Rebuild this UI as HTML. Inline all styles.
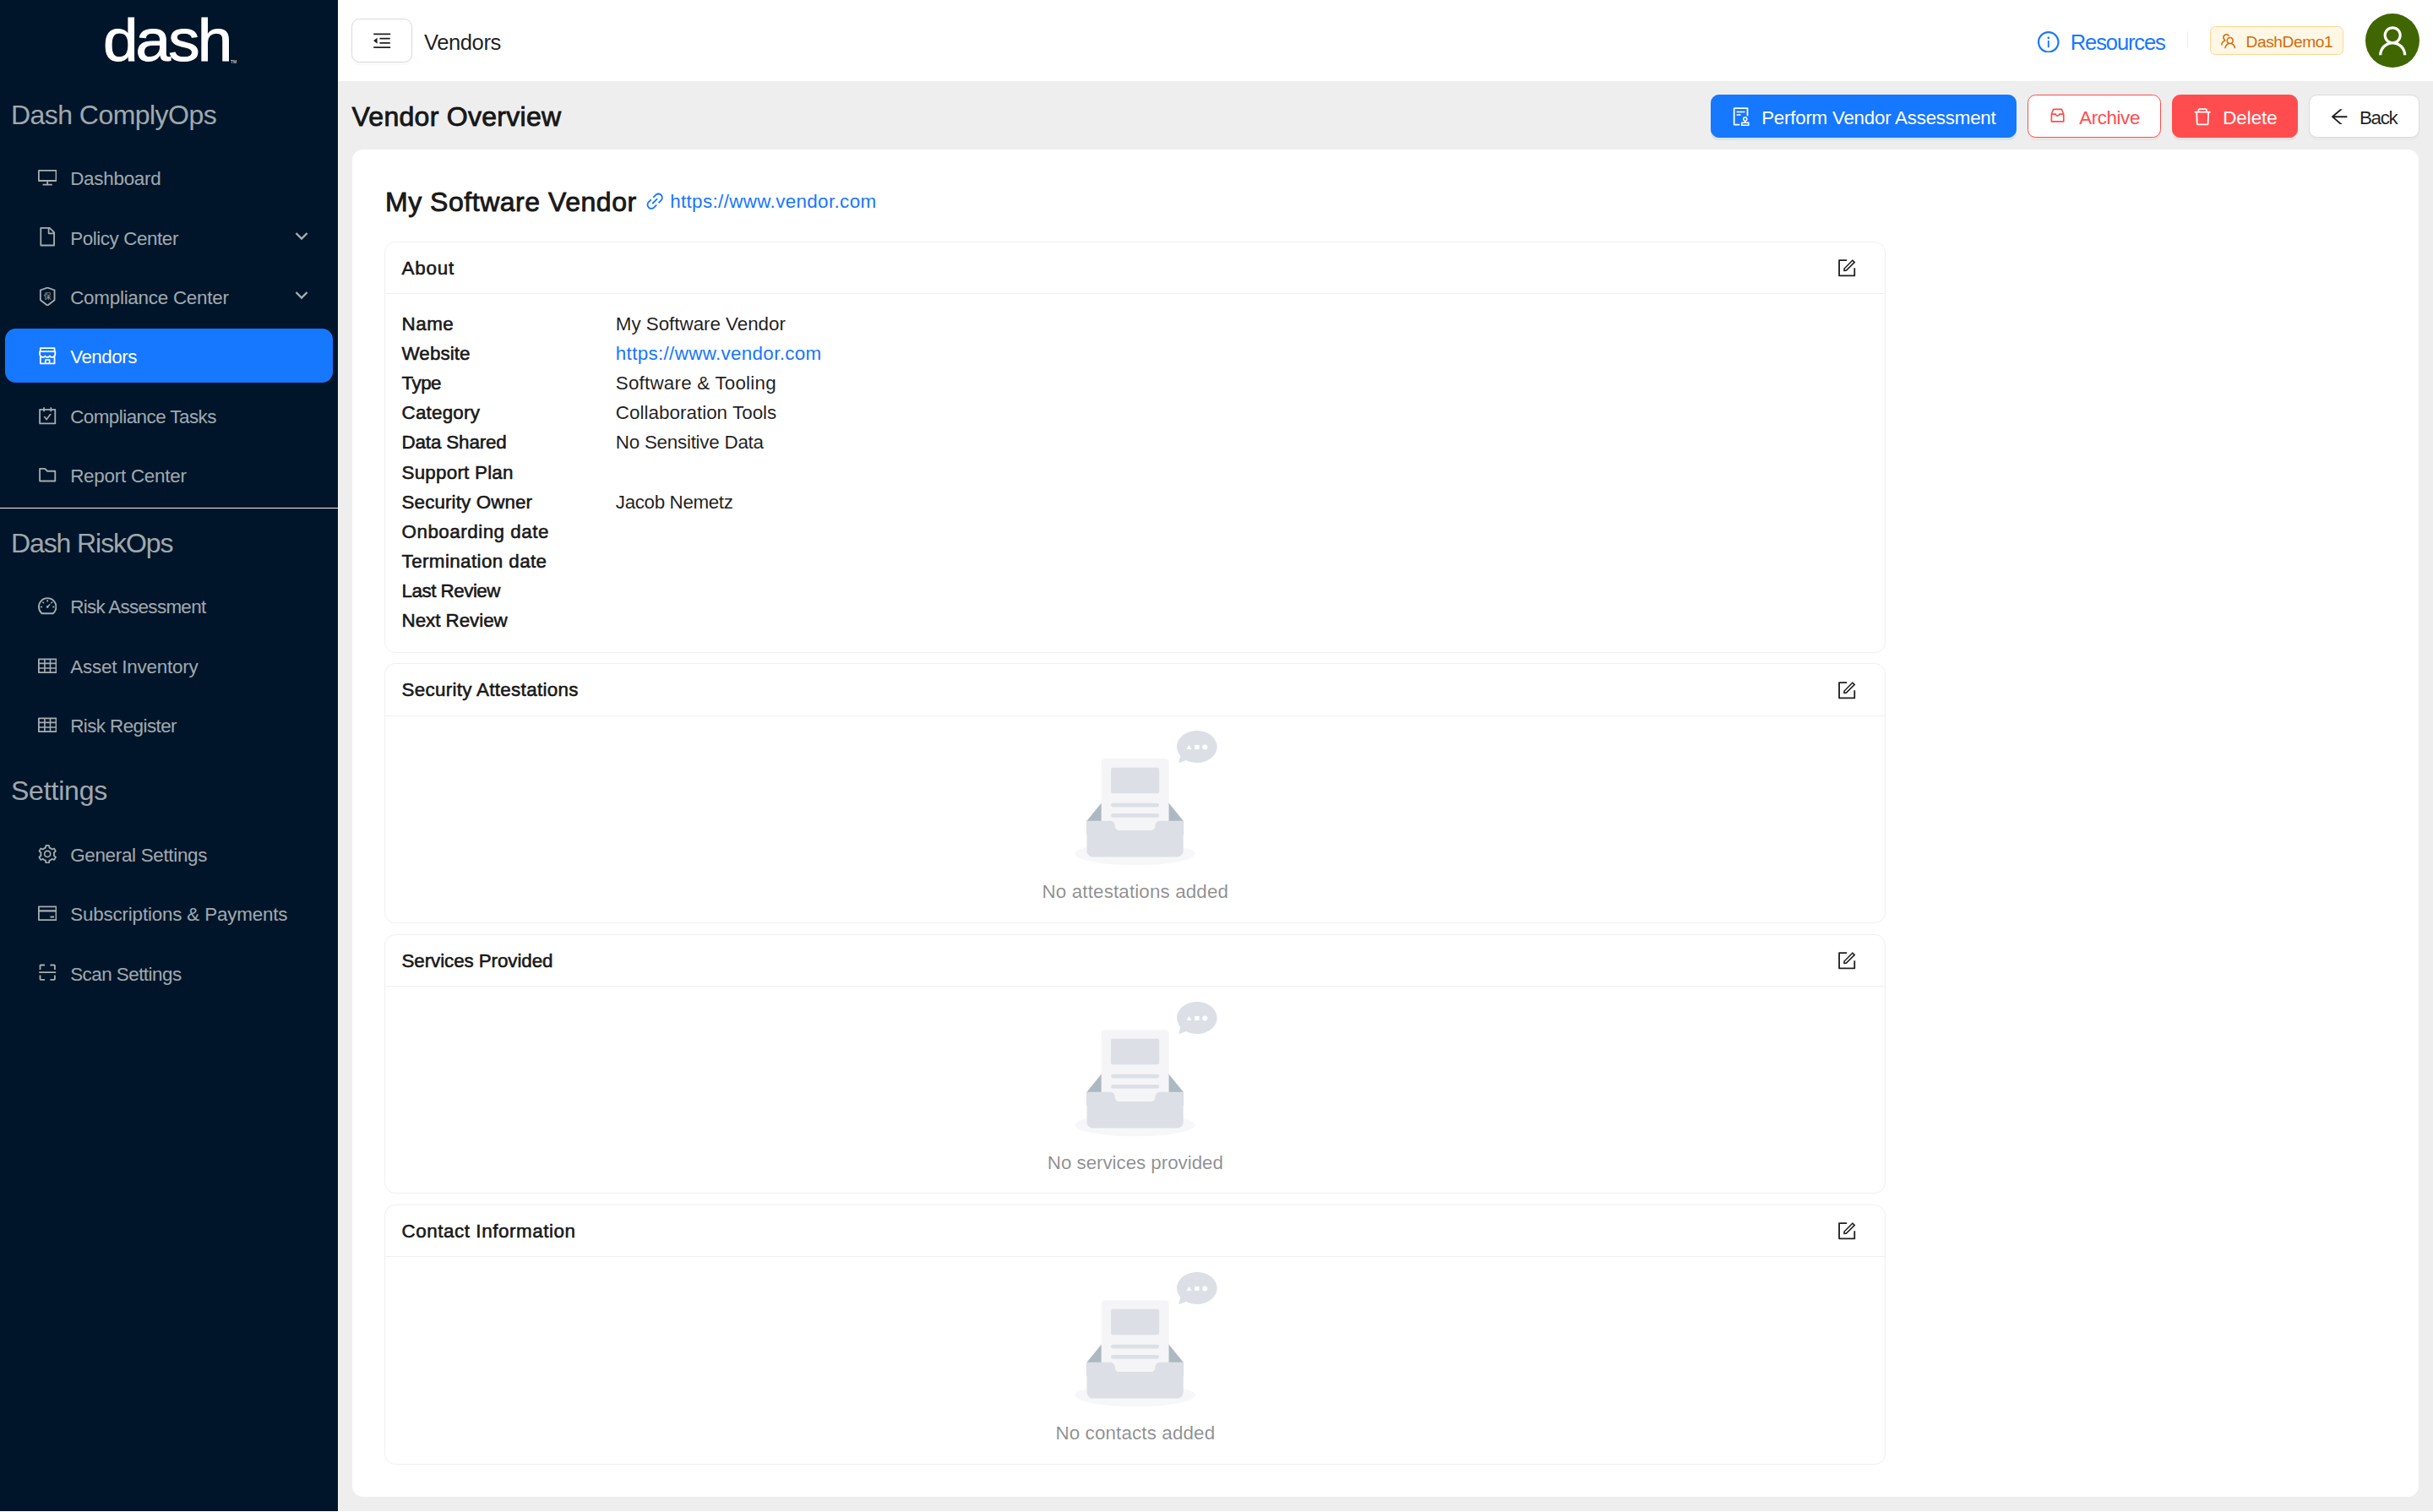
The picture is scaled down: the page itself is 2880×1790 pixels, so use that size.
<!DOCTYPE html>
<html lang="en">
<head>
<meta charset="utf-8">
<title>Vendors - Dash ComplyOps</title>
<style>
*{box-sizing:border-box}
html,body{margin:0;padding:0;background:#fff}
body{zoom:1.6;font-family:"Liberation Sans","Noto Sans CJK SC",sans-serif;font-size:14px;line-height:22px;color:rgba(0,0,0,.88);overflow:hidden;-webkit-font-smoothing:antialiased}
h1,h2,h3,h4,ul,li,p{margin:0;padding:0;font-weight:inherit;font-size:inherit}
ul{list-style:none}
a{color:#1677ff;text-decoration:none}
.anticon{display:inline-flex;align-items:center;line-height:0;flex:none}
.anticon svg{display:block}
.tx{position:relative;top:.0675em;white-space:nowrap}
.sb{font-weight:400!important;-webkit-text-stroke:.028em currentColor}
#app{position:relative;width:1800px;height:1118px;background:#eee;overflow:hidden}
/* ---------- sidebar ---------- */
.sider{position:absolute;left:0;top:0;width:250px;height:1118px;background:#001529;color:rgba(255,255,255,.65)}
.sider-edge{position:absolute;left:250px;top:0;width:.625px;height:1118px;background:#f5f5f5}
.logo{position:relative;height:60px;color:#fff}
.logo-text{position:absolute;left:76.1px;top:.1px;font-size:44.1px;line-height:60px;-webkit-text-stroke:.6px #fff;transform:scaleX(1.06);transform-origin:0 50%}
.logo-text .tx{letter-spacing:-1.75px!important;top:0}
.logo-tm{position:absolute;left:170.6px;top:44.9px;font-size:3px;line-height:3px;letter-spacing:.1px}
.grp{height:28px;line-height:28.2px;font-size:20px;font-weight:400;padding-left:8.1px;white-space:nowrap}
.menu{padding-top:4px;display:flow-root}
.mi{position:relative;display:flex;align-items:center;height:40px;line-height:40px;margin:0 4px 4px 4px;padding-left:24px;border-radius:8px;white-space:nowrap}
.mi .mt{margin-left:10px;top:calc(.0675em + .34px)}
.mi.sel{background:#1677ff;color:#fff}
.mi .arrow{position:absolute;right:18px;top:50%;margin-top:-5.45px;width:10px;height:10px}
.sdiv{height:.625px;background:#f0f0f0;width:250.625px}
/* ---------- header ---------- */
.main{position:absolute;left:250px;top:0;width:1550px;height:1118px}
.hdr{position:relative;height:60px;background:#fff}
.btn{display:inline-flex;align-items:center;justify-content:center;height:32px;padding:0 15px;border:1px solid #d9d9d9;border-radius:6px;background:#fff;font-size:14px;line-height:22px;color:rgba(0,0,0,.88);box-shadow:0 2px 0 rgba(0,0,0,.02);white-space:nowrap;font-family:inherit}
.btn .anticon+span,.btn .icw+span{margin-left:8px}
.btn .tx{top:calc(.0675em + .6px)}
.actions .btn{justify-content:flex-start}
.btn.primary{background:#1677ff;border-color:#1677ff;color:#fff;box-shadow:0 2px 0 rgba(5,145,255,.1)}
.btn.danger{background:#ff4d4f;border-color:#ff4d4f;color:#fff;box-shadow:0 2px 0 rgba(255,38,5,.06)}
.btn.danger-o{border-color:#ff4d4f;color:#ff4d4f;box-shadow:0 2px 0 rgba(255,38,5,.06)}
.toggle{position:absolute;left:10.3px;top:13.9px;width:44.4px;height:32.4px;padding:0}
.crumb{position:absolute;left:63.7px;top:0;height:60px;line-height:60px;font-size:16px}
.res{position:absolute;left:1257.7px;top:0;height:60px;display:flex;align-items:center;font-size:16px;color:#1677ff}
.res .anticon{margin-right:8px;position:relative;top:.9px}
.res .tx{top:calc(.0675em + .6px)}
.vdiv{position:absolute;left:1368.2px;top:23.3px;width:.625px;height:12.6px;background:rgba(5,5,5,.06)}
.tag{position:absolute;left:1385px;top:19.5px;height:21.2px;width:98.75px;display:flex;align-items:center;padding:0 7px;border:1px solid #ffd591;border-radius:4px;background:#fff7e6;color:#d46b08;font-size:12px;line-height:20px}
.tag .anticon{margin-right:7px}
.tag .tx{top:calc(.0675em + .5px)}
.avatar{position:absolute;left:1500px;top:10px;width:40px;height:40px;border-radius:50%;background:#3f6600;color:#fff;display:flex;align-items:center;justify-content:center}
/* ---------- content ---------- */
.titlebar{position:absolute;left:10.3px;right:10px;top:70px;height:32px;display:flex;align-items:center;justify-content:space-between}
.titlebar h4{font-size:20px;font-weight:700;line-height:28px;position:relative}
.actions{display:flex;gap:8px}
.card{position:absolute;left:10.6px;top:110.6px;width:1528.8px;height:996.8px;background:#fff;border-radius:8px;padding:23.4px 24px 0 24px}
.vh{display:flex;align-items:center;height:28px}
.vh h4{font-size:20px;line-height:28px;left:.4px}
.vh .lnk{display:flex;align-items:center;margin-left:7px;height:22px;position:relative;top:0}
.vh .lnk .anticon{margin-right:4.1px;position:relative;top:.6px}
.scard{width:1110.6px;border:1px solid #f0f0f0;border-radius:8px;background:#fff;margin-top:8px;height:192.25px}
.scard.first{margin-top:16.65px;height:304.25px}
.shead{height:38.2px;padding:0 12px;display:flex;align-items:center;justify-content:space-between;border-bottom:1px solid #f0f0f0;font-weight:700}
.shead .edit{padding:0 8.95px;display:flex;align-items:center;height:24px;position:relative;top:.2px}
.sbody{padding:10.1px 12px 0 12px}
.about .sbody{}
.empty .sbody{padding-top:11.2px}
.row{display:flex;height:22px;line-height:22px}
.row .lb{width:158.3px;font-weight:700;flex:none}
.eimg{height:100px;text-align:center}
.eimg svg{height:100px;width:121.05px;display:inline-block;overflow:visible;position:relative;left:0}
.etxt{margin-top:7.2px;text-align:center;color:rgba(0,0,0,.45);height:22px;line-height:22px}

.actions .btn>.anticon{position:relative;top:.3px}
.actions .btn .icw{position:relative;top:-.4px;left:-.4px}
.actions .btn .icw+span{margin-left:8.6px}

.shead .tx{top:calc(.0675em - .6px)}
.titlebar h4.tx{top:calc(.0675em - .75px)}

</style>
</head>
<body>
<div id="app">
<aside class="sider">
  <div class="logo"><span class="logo-text"><span class="tx" style="letter-spacing:-0.417px;">dash</span></span><span class="logo-tm">TM</span></div>
  <h4 class="grp" style="margin-top:9.6px"><span class="tx" style="letter-spacing:-0.337px;">Dash ComplyOps</span></h4>
  <ul class="menu" style="margin-top:9.78px">
    <li class="mi"><span class="anticon" style="font-size:14px;"><svg viewBox="64 64 896 896" width="1em" height="1em" fill="currentColor"><path d="M928 140H96c-17.7 0-32 14.3-32 32v496c0 17.7 14.3 32 32 32h380v112H304c-8.8 0-16 7.2-16 16v48c0 4.400 3.600 8 8 8h432c4.400 0 8-3.600 8-8v-48c0-8.800-7.200-16-16-16H548V700h380c17.700 0 32-14.300 32-32V172c0-17.700-14.300-32-32-32zm-40 488H136V212h752v416z"/></svg></span><span class="tx mt" style="letter-spacing:-0.156px;">Dashboard</span></li>
    <li class="mi"><span class="anticon" style="font-size:14px;"><svg viewBox="64 64 896 896" width="1em" height="1em" fill="currentColor"><path d="M854.6 288.6L639.4 73.4c-6-6-14.1-9.4-22.6-9.4H192c-17.7 0-32 14.3-32 32v832c0 17.7 14.3 32 32 32h640c17.7 0 32-14.3 32-32V311.3c0-8.500-3.400-16.700-9.400-22.700zM790.200 326H602V137.800L790.200 326zm1.800 562H232V136h302v216a42 42 0 0042 42h216v494z"/></svg></span><span class="tx mt" style="letter-spacing:-0.26px;">Policy Center</span><svg class="arrow" viewBox="0 0 10 10"><path d="M.9 2.5 5 6.6 9.1 2.5" fill="none" stroke="currentColor" stroke-width="1.5"/></svg></li>
    <li class="mi"><span class="anticon" style="font-size:14px;"><svg viewBox="64 64 896 896" width="1em" height="1em" fill="currentColor"><path d="M866.9 169.9L527.1 54.1C523 52.7 517.5 52 512 52s-11 .7-15.1 2.1L157.1 169.9c-8.3 2.8-15.1 12.5-15.1 21.3v482.4c0 8.800 5.700 20.400 12.600 25.900L499.300 968.100c3.500 2.700 8 4.100 12.600 4.100s9.200-1.400 12.600-4.100l344.700-268.600c6.900-5.400 12.600-17 12.600-25.900V191.200c.200-8.800-6.600-18.400-14.900-21.300zM810 654.300L512 886.500 214 654.300V226.700l298-101.600 298 101.600v427.600z"/><text x="512" y="640" font-size="350" text-anchor="middle" font-family="'Noto Sans CJK SC','WenQuanYi Zen Hei',sans-serif">保</text></svg></span><span class="tx mt" style="letter-spacing:-0.156px;">Compliance Center</span><svg class="arrow" viewBox="0 0 10 10"><path d="M.9 2.5 5 6.6 9.1 2.5" fill="none" stroke="currentColor" stroke-width="1.5"/></svg></li>
    <li class="mi sel"><span class="anticon" style="font-size:14px;"><svg viewBox="64 64 896 896" width="1em" height="1em" fill="currentColor"><path d="M882 272.1V144c0-17.7-14.3-32-32-32H174c-17.7 0-32 14.3-32 32v128.1c-16.7 1-30 14.9-30 31.900v131.700a177 177 0 0014.400 70.400c4.300 10.200 9.600 19.800 15.600 28.900v345c0 17.600 14.300 32 32 32h676c17.700 0 32-14.300 32-32V535a175 175 0 0015.600-28.900c9.500-22.300 14.400-46 14.400-70.400V304c0-17-13.300-30.900-30-31.900zM214 184h596v88H214v-88zm362 656.100H448V736h128v104.100zm234 0H640V704c0-17.700-14.300-32-32-32H416c-17.700 0-32 14.300-32 32v136.100H214V597.900c2.900 1.400 5.900 2.800 9 4 22.300 9.400 46 14.100 70.400 14.100s48-4.700 70.400-14.100c13.800-5.800 26.800-13.200 38.700-22.100.2-.1.4-.1.600 0a180.400 180.400 0 0038.700 22.100c22.300 9.400 46 14.100 70.400 14.100 24.400 0 48-4.700 70.400-14.100 13.800-5.800 26.800-13.200 38.700-22.100.2-.1.4-.1.600 0a180.400 180.400 0 0038.700 22.100c22.300 9.400 46 14.100 70.400 14.100 24.400 0 48-4.700 70.400-14.100 3-1.300 6-2.600 9-4v242.200zm30-404.400c0 59.800-49 108.300-109.300 108.300-40.800 0-76.400-22.100-95.200-54.900-2.900-5-8.100-8.100-13.900-8.100h-.6c-5.700 0-11 3.100-13.900 8.100A109.240 109.240 0 01512 544c-40.700 0-76.200-22-95-54.700-3-5.100-8.400-8.300-14.300-8.300s-11.400 3.200-14.300 8.300a109.630 109.630 0 01-95.100 54.700C233 544 184 495.500 184 435.700v-91.200c0-.3.200-.5.500-.5h655c.3 0 .5.200.5.500v91.200z"/></svg></span><span class="tx mt" style="letter-spacing:-0.302px;">Vendors</span></li>
    <li class="mi"><span class="anticon" style="font-size:14px;"><svg viewBox="64 64 896 896" width="1em" height="1em" fill="currentColor"><path d="M880 184H712v-64c0-4.400-3.600-8-8-8h-56c-4.400 0-8 3.600-8 8v64H384v-64c0-4.400-3.600-8-8-8h-56c-4.400 0-8 3.600-8 8v64H144c-17.700 0-32 14.300-32 32v664c0 17.700 14.300 32 32 32h736c17.700 0 32-14.300 32-32V216c0-17.700-14.300-32-32-32zm-40 656H184V256h128v48c0 4.400 3.600 8 8 8h56c4.400 0 8-3.600 8-8v-48h256v48c0 4.400 3.600 8 8 8h56c4.400 0 8-3.600 8-8v-48h128v584zM688 420h-55.200c-5.100 0-10 2.500-13 6.600L468.200 634.600l-64.200-88c-3-4.100-7.800-6.600-13-6.600H336c-6.500 0-10.300 7.400-6.500 12.700l126.100 173a16.100 16.100 0 0026 0l212.600-293c3.800-5.300 0-12.700-6.200-12.700z"/></svg></span><span class="tx mt" style="letter-spacing:-0.333px;">Compliance Tasks</span></li>
    <li class="mi"><span class="anticon" style="font-size:14px;"><svg viewBox="64 64 896 896" width="1em" height="1em" fill="currentColor"><path d="M880 298.4H521L403.700 186.200a8.150 8.150 0 00-5.500-2.200H144c-17.700 0-32 14.300-32 32v592c0 17.700 14.300 32 32 32h736c17.700 0 32-14.300 32-32V330.400c0-17.700-14.300-32-32-32zM840 768H184V256h188.500l119.600 114.400H840V768z"/></svg></span><span class="tx mt" style="letter-spacing:-0.151px;">Report Center</span></li>
  </ul>
  <div class="sdiv" style="margin-top:.5px"></div>
  <h4 class="grp" style="margin-top:10.6px"><span class="tx" style="letter-spacing:-0.682px;">Dash RiskOps</span></h4>
  <ul class="menu" style="margin-top:9.3px">
    <li class="mi"><span class="anticon" style="font-size:14px;"><svg viewBox="64 64 896 896" width="1em" height="1em" fill="currentColor"><path d="M924.8 385.600a446.700 446.700 0 00-96-142.400 446.700 446.700 0 00-142.400-96C631.100 123.800 572.500 112 512 112s-119.100 11.800-174.400 35.200a446.700 446.700 0 00-142.400 96 446.700 446.700 0 00-96 142.400C75.800 440.900 64 499.500 64 560c0 132.700 58.300 257.700 159.900 343.100l1.700 1.400c5.800 4.800 13.100 7.500 20.600 7.500h531.700c7.500 0 14.800-2.700 20.600-7.500l1.700-1.400C901.700 817.700 960 692.700 960 560c0-60.500-11.900-119.100-35.200-174.400zM761.400 836H262.600A371.120 371.120 0 01140 560c0-99.400 38.700-192.800 109-263 70.300-70.300 163.700-109 263-109 99.400 0 192.800 38.700 263 109 70.300 70.300 109 163.700 109 263 0 105.600-44.500 205.500-122.600 276zM623.500 421.500a8.030 8.030 0 00-11.300 0L527.700 506c-18.700-5-39.400-.2-54.100 14.500a55.950 55.950 0 000 79.200 55.950 55.950 0 0079.200 0 55.870 55.870 0 0014.500-54.100l84.500-84.500c3.100-3.100 3.100-8.200 0-11.300l-28.300-28.300zM490 320h44c4.400 0 8-3.600 8-8v-80c0-4.400-3.600-8-8-8h-44c-4.400 0-8 3.600-8 8v80c0 4.400 3.600 8 8 8zm260 218v44c0 4.400 3.600 8 8 8h80c4.400 0 8-3.600 8-8v-44c0-4.400-3.600-8-8-8h-80c-4.400 0-8 3.600-8 8zm12.700-197.200l-31.100-31.100a8.030 8.030 0 00-11.300 0l-56.600 56.600a8.030 8.030 0 000 11.300l31.100 31.100c3.100 3.100 8.200 3.100 11.300 0l56.600-56.600c3.100-3.100 3.100-8.200 0-11.300zm-458.600-31.100a8.030 8.030 0 00-11.300 0l-31.100 31.100a8.030 8.030 0 000 11.300l56.600 56.600c3.100 3.100 8.200 3.100 11.300 0l31.100-31.100c3.100-3.100 3.100-8.200 0-11.300l-56.600-56.600zM262 530h-80c-4.400 0-8 3.600-8 8v44c0 4.400 3.600 8 8 8h80c4.400 0 8-3.600 8-8v-44c0-4.400-3.600-8-8-8z"/></svg></span><span class="tx mt" style="letter-spacing:-0.424px;">Risk Assessment</span></li>
    <li class="mi"><span class="anticon" style="font-size:14px;"><svg viewBox="64 64 896 896" width="1em" height="1em" fill="currentColor"><path d="M928 160H96c-17.700 0-32 14.300-32 32v640c0 17.700 14.300 32 32 32h832c17.700 0 32-14.300 32-32V192c0-17.700-14.300-32-32-32zm-40 208H676V232h212v136zm0 224H676V432h212v160zM412 432h200v160H412V432zm200-64H412V232h200v136zm-476 64h212v160H136V432zm0-200h212v136H136V232zm0 424h212v136H136V656zm276 0h200v136H412V656zm476 136H676V656h212v136z"/></svg></span><span class="tx mt" style="letter-spacing:-0.123px;">Asset Inventory</span></li>
    <li class="mi"><span class="anticon" style="font-size:14px;"><svg viewBox="64 64 896 896" width="1em" height="1em" fill="currentColor"><path d="M928 160H96c-17.700 0-32 14.300-32 32v640c0 17.700 14.300 32 32 32h832c17.700 0 32-14.300 32-32V192c0-17.700-14.300-32-32-32zm-40 208H676V232h212v136zm0 224H676V432h212v160zM412 432h200v160H412V432zm200-64H412V232h200v136zm-476 64h212v160H136V432zm0-200h212v136H136V232zm0 424h212v136H136V656zm276 0h200v136H412V656zm476 136H676V656h212v136z"/></svg></span><span class="tx mt" style="letter-spacing:-0.352px;">Risk Register</span></li>
  </ul>
  <h4 class="grp" style="margin-top:9.8px"><span class="tx" style="letter-spacing:-0.112px;">Settings</span></h4>
  <ul class="menu" style="margin-top:9.64px">
    <li class="mi"><span class="anticon" style="font-size:14px;"><svg viewBox="64 64 896 896" width="1em" height="1em" fill="currentColor"><path d="M924.8 625.700l-65.500-56c3.100-19 4.700-38.400 4.700-57.800s-1.600-38.800-4.700-57.800l65.500-56a32.030 32.030 0 009.300-35.200l-.9-2.600a442.600 442.600 0 00-79.700-137.900l-1.800-2.100a32.120 32.120 0 00-35.100-9.500l-81.300 28.900c-30-24.600-63.500-44-99.700-57.600l-15.700-85a32.050 32.050 0 00-25.800-25.700l-2.700-.5c-52.100-9.400-106.900-9.400-159 0l-2.700.5a32.050 32.050 0 00-25.800 25.700l-15.800 85.400a351.860 351.860 0 00-99 57.400l-81.900-29.100a32 32 0 00-35.100 9.500l-1.800 2.100a446.020 446.020 0 00-79.700 137.900l-.9 2.600c-4.500 12.500-.8 26.500 9.300 35.200l66.300 56.600c-3.100 18.800-4.600 38-4.600 57.100 0 19.200 1.500 38.400 4.600 57.100L99 625.500a32.030 32.030 0 00-9.300 35.200l.9 2.600c18.100 50.400 44.900 96.900 79.700 137.900l1.800 2.100a32.120 32.120 0 0035.100 9.500l81.900-29.100c29.800 24.500 63.100 43.900 99 57.400l15.800 85.400a32.050 32.050 0 0025.800 25.700l2.700.5a449.400 449.400 0 00159 0l2.700-.5a32.050 32.050 0 0025.800-25.700l15.700-85a350 350 0 0099.700-57.600l81.300 28.900a32 32 0 0035.100-9.500l1.800-2.100c34.800-41.100 61.600-87.500 79.700-137.900l.9-2.600c4.500-12.300.8-26.300-9.300-35zM788.300 465.900c2.500 15.100 3.800 30.600 3.800 46.100s-1.300 31-3.800 46.100l-6.600 40.100 74.700 63.900a370.030 370.030 0 01-42.600 73.600L721 702.800l-31.400 25.800c-23.900 19.600-50.500 35-79.300 45.800l-38.100 14.300-17.900 97a377.500 377.500 0 01-85 0l-17.900-97.200-37.800-14.500c-28.500-10.800-55-26.200-78.700-45.700l-31.400-25.900-93.400 33.200c-17-22.900-31.200-47.600-42.600-73.600l75.500-64.500-6.500-40c-2.400-14.900-3.700-30.300-3.700-45.500 0-15.300 1.200-30.600 3.700-45.500l6.500-40-75.500-64.500c11.300-26.100 25.600-50.700 42.600-73.600l93.400 33.200 31.400-25.900c23.700-19.500 50.200-34.900 78.700-45.700l37.900-14.300 17.900-97.200c28.100-3.200 56.800-3.200 85 0l17.900 97 38.100 14.300c28.700 10.800 55.400 26.200 79.300 45.800l31.400 25.800 92.800-32.900c17 22.900 31.200 47.600 42.600 73.600L781.800 426l6.500 39.900zM512 326c-97.200 0-176 78.800-176 176s78.800 176 176 176 176-78.800 176-176-78.800-176-176-176zm79.200 255.200A111.600 111.600 0 01512 614c-29.900 0-58-11.700-79.200-32.800A111.600 111.600 0 01400 502c0-29.900 11.700-58 32.800-79.200C454 401.600 482.100 390 512 390c29.900 0 58 11.600 79.200 32.800A111.600 111.600 0 01624 502c0 29.900-11.700 58-32.800 79.200z"/></svg></span><span class="tx mt" style="letter-spacing:-0.187px;">General Settings</span></li>
    <li class="mi"><span class="anticon" style="font-size:14px;"><svg viewBox="64 64 896 896" width="1em" height="1em" fill="currentColor"><path d="M928 160H96c-17.700 0-32 14.300-32 32v640c0 17.700 14.300 32 32 32h832c17.700 0 32-14.300 32-32V192c0-17.700-14.300-32-32-32zm-792 72h752v120H136V232zm752 560H136V440h752v352zm-237-64h165c4.400 0 8-3.600 8-8v-72c0-4.400-3.600-8-8-8H651c-4.400 0-8 3.600-8 8v72c0 4.400 3.600 8 8 8z"/></svg></span><span class="tx mt" style="letter-spacing:-0.109px;">Subscriptions &amp; Payments</span></li>
    <li class="mi"><span class="anticon" style="font-size:14px;"><svg viewBox="64 64 896 896" width="1em" height="1em" fill="currentColor"><path d="M136 384h56c4.400 0 8-3.600 8-8V200h176c4.400 0 8-3.600 8-8v-56c0-4.400-3.600-8-8-8H196c-37.600 0-68 30.400-68 68v180c0 4.400 3.600 8 8 8zm512-184h176v176c0 4.400 3.600 8 8 8h56c4.400 0 8-3.600 8-8V196c0-37.600-30.400-68-68-68H648c-4.400 0-8 3.600-8 8v56c0 4.400 3.600 8 8 8zM376 824H200V648c0-4.400-3.600-8-8-8h-56c-4.400 0-8 3.600-8 8v180c0 37.600 30.400 68 68 68h180c4.400 0 8-3.600 8-8v-56c0-4.400-3.600-8-8-8zm512-184h-56c-4.400 0-8 3.600-8 8v176H648c-4.400 0-8 3.600-8 8v56c0 4.400 3.600 8 8 8h180c37.600 0 68-30.400 68-68V648c0-4.400-3.600-8-8-8zm16-164H120c-4.400 0-8 3.600-8 8v56c0 4.400 3.600 8 8 8h784c4.400 0 8-3.600 8-8v-56c0-4.400-3.600-8-8-8z"/></svg></span><span class="tx mt" style="letter-spacing:-0.326px;">Scan Settings</span></li>
  </ul>
</aside>
<div class="sider-edge"></div>
<section class="main">
  <header class="hdr">
    <button class="btn toggle"><span class="anticon" style="font-size:14px;"><svg viewBox="64 64 896 896" width="1em" height="1em" fill="currentColor"><path d="M408 442h480c4.400 0 8-3.600 8-8v-56c0-4.400-3.600-8-8-8H408c-4.400 0-8 3.600-8 8v56c0 4.400 3.600 8 8 8zm-8 204c0 4.400 3.600 8 8 8h480c4.400 0 8-3.600 8-8v-56c0-4.400-3.600-8-8-8H408c-4.400 0-8 3.600-8 8v56zm504-486H120c-4.400 0-8 3.600-8 8v56c0 4.400 3.600 8 8 8h784c4.400 0 8-3.600 8-8v-56c0-4.400-3.600-8-8-8zm0 632H120c-4.400 0-8 3.600-8 8v56c0 4.400 3.600 8 8 8h784c4.400 0 8-3.600 8-8v-56c0-4.400-3.600-8-8-8zM115.400 518.900L271.700 642c5.800 4.600 14.400.5 14.400-6.900V388.900c0-7.400-8.500-11.500-14.400-6.900L115.400 505.100a8.740 8.740 0 000 13.800z"/></svg></span></button>
    <span class="crumb"><span class="tx" style="letter-spacing:-0.26px;">Vendors</span></span>
    <a class="res"><span class="anticon" style="font-size:16px;"><svg viewBox="64 64 896 896" width="1em" height="1em" fill="currentColor"><path d="M512 64C264.600 64 64 264.600 64 512s200.600 448 448 448 448-200.600 448-448S759.400 64 512 64zm0 820c-205.400 0-372-166.600-372-372s166.600-372 372-372 372 166.600 372 372-166.600 372-372 372z"/><path d="M464 336a48 48 0 1096 0 48 48 0 10-96 0zm72 112h-48c-4.400 0-8 3.600-8 8v272c0 4.400 3.600 8 8 8h48c4.400 0 8-3.600 8-8V456c0-4.400-3.600-8-8-8z"/></svg></span><span class="tx" style="letter-spacing:-0.715px;">Resources</span></a>
    <span class="vdiv"></span>
    <span class="tag"><span class="anticon" style="font-size:12px;"><svg viewBox="64 64 896 896" width="1em" height="1em" fill="currentColor"><path d="M824.200 699.900a301.550 301.550 0 00-86.400-60.400C783.100 602.800 812 546.800 812 484c0-110.800-92.400-201.700-203.200-200-109.100 1.700-197 90.600-197 200 0 62.800 29 118.800 74.200 155.500a300.950 300.950 0 00-86.400 60.400C345 754.600 314 826.800 312 903.800a8 8 0 008 8.200h56c4.300 0 7.900-3.400 8-7.700 1.900-58 25.400-112.300 66.700-153.500A226.620 226.620 0 01612 684c60.900 0 118.200 23.700 161.300 66.800C814.500 792 838 846.300 840 904.300c.1 4.300 3.700 7.700 8 7.700h56a8 8 0 008-8.200c-2-77-33-149.200-87.800-203.900zM612 612c-34.200 0-66.400-13.300-90.500-37.500a126.860 126.860 0 01-37.500-91.800c.3-32.800 13.400-64.500 36.300-88 24-24.600 56.100-38.300 90.400-38.700 33.900-.3 66.800 12.900 91 36.600 24.800 24.300 38.400 56.800 38.400 91.400 0 34.200-13.300 66.300-37.500 90.500A127.300 127.300 0 01612 612zM361.500 510.400c-.9-8.700-1.400-17.500-1.400-26.400 0-15.900 1.500-31.400 4.300-46.500.7-3.600-1.200-7.300-4.500-8.800-13.600-6.100-26.100-14.500-36.900-25.100a127.540 127.540 0 01-38.700-95.400c.9-32.100 13.800-62.600 36.300-85.600 24.700-25.300 57.900-39.100 93.200-38.700 31.900.3 62.700 12.600 86 34.400 7.900 7.400 14.700 15.600 20.400 24.400 2 3.100 5.900 4.400 9.300 3.200 17.600-6.100 36.200-10.400 55.300-12.400 5.600-.6 8.800-6.600 6.300-11.600-32.500-64.300-98.900-108.700-175.700-109.900-110.900-1.700-203.300 89.200-203.300 199.900 0 62.800 28.900 118.800 74.200 155.500-31.800 14.700-61.100 35-86.500 60.400-54.800 54.700-85.800 126.900-87.800 204a8 8 0 008 8.200h56.100c4.300 0 7.900-3.400 8-7.700 1.900-58 25.400-112.300 66.700-153.500 29.400-29.400 65.400-49.800 104.700-59.700 3.900-1 6.500-4.700 6-8.700z"/></svg></span><span class="tx" style="letter-spacing:-0.285px;">DashDemo1</span></span>
    <span class="avatar"><span class="anticon" style="font-size:24px;"><svg viewBox="64 64 896 896" width="1em" height="1em" fill="currentColor"><path d="M858.500 763.600a374 374 0 00-80.600-119.500 375.630 375.630 0 00-119.500-80.600c-.4-.2-.8-.3-1.200-.5C719.500 518 760 444.700 760 362c0-137-111-248-248-248S264 225 264 362c0 82.700 40.500 156 102.800 201.100-.4.2-.8.3-1.200.5-44.800 18.900-85 46-119.500 80.600a375.630 375.630 0 00-80.600 119.500A371.700 371.700 0 00136 901.800a8 8 0 008 8.200h60c4.400 0 7.900-3.500 8-7.800 2-77.200 33-149.500 87.800-204.300 56.700-56.700 132-87.900 212.200-87.900s155.500 31.200 212.200 87.900C779 752.700 810 825 812 902.200c.1 4.400 3.600 7.800 8 7.800h60a8 8 0 008-8.200c-1-47.800-10.900-94.300-29.500-138.200zM512 534c-45.900 0-89.100-17.900-121.600-50.400S340 407.900 340 362c0-45.900 17.900-89.100 50.400-121.600S466.100 190 512 190s89.100 17.900 121.600 50.400S684 316.100 684 362c0 45.900-17.900 89.100-50.400 121.600S557.900 534 512 534z"/></svg></span></span>
  </header>
  <div class="titlebar">
    <h4 class="tx sb" style="letter-spacing:0.179px;">Vendor Overview</h4>
    <div class="actions">
      <button class="btn primary" style="width:226.4px"><span class="anticon" style="font-size:14px;"><svg viewBox="64 64 896 896" width="1em" height="1em" fill="currentColor"><path d="M296 250c-4.400 0-8 3.600-8 8v48c0 4.400 3.600 8 8 8h384c4.400 0 8-3.600 8-8v-48c0-4.400-3.600-8-8-8H296zm184 144H296c-4.400 0-8 3.600-8 8v48c0 4.400 3.600 8 8 8h184c4.400 0 8-3.600 8-8v-48c0-4.400-3.600-8-8-8zm-48 458H208V148h560v320c0 4.400 3.600 8 8 8h56c4.400 0 8-3.600 8-8V108c0-17.700-14.300-32-32-32H168c-17.700 0-32 14.300-32 32v784c0 17.700 14.300 32 32 32h264c4.400 0 8-3.600 8-8v-56c0-4.400-3.600-8-8-8zm440-88H728v-36.600c46.300-13.800 80-56.600 80-107.400 0-61.900-50.100-112-112-112s-112 50.100-112 112c0 50.700 33.700 93.600 80 107.400V764H520c-8.800 0-16 7.200-16 16v152c0 8.800 7.200 16 16 16h352c8.800 0 16-7.200 16-16V780c0-8.800-7.200-16-16-16zM646 620c0-27.600 22.400-50 50-50s50 22.400 50 50-22.400 50-50 50-50-22.400-50-50zm180 266H566v-60h260v60z"/></svg></span><span class="tx" style="letter-spacing:-0.161px;">Perform Vendor Assessment</span></button>
      <button class="btn danger-o" style="width:98.9px"><span class="icw" style="display:inline-flex;width:14px;justify-content:center"><span class="anticon" style="font-size:12px;"><svg viewBox="64 64 896 896" width="1em" height="1em" fill="currentColor"><path d="M885.200 446.300l-.2-.8-112.200-285.100c-5-16.100-19.900-27.200-36.800-27.200H281.200c-17 0-32.100 11.300-36.900 27.600L139.400 443l-.3.700-.2.8c-1.300 4.900-1.700 9.900-1 14.800-.1 1.600-.2 3.200-.2 4.800V830a60.900 60.900 0 0060.800 60.800h627.200c33.500 0 60.800-27.300 60.900-60.800V464.100c0-1.300 0-2.600-.1-3.700.4-4.900 0-9.600-1.300-14.100zm-295.800-43l-.3 15.700c-.8 44.900-31.800 75.100-77.100 75.100-22.100 0-41.100-7.100-54.800-20.600S436 441.200 435.600 419l-.3-15.700H229.500L309 210h399.200l81.700 193.300H589.400zm-375 76.800h157.300c24.300 57.100 76 90.800 140.400 90.800 33.700 0 65-9.400 90.300-27.200 22.200-15.600 39.500-37.400 50.700-63.600h156.500V814H214.400V480.100z"/></svg></span></span><span class="tx" style="letter-spacing:-0.26px;">Archive</span></button>
      <button class="btn danger" style="width:93.1px"><span class="anticon" style="font-size:14px;"><svg viewBox="64 64 896 896" width="1em" height="1em" fill="currentColor"><path d="M360 184h-8c4.400 0 8-3.600 8-8v8h304v-8c0 4.400 3.600 8 8 8h-8v72h72v-80c0-35.300-28.700-64-64-64H352c-35.300 0-64 28.700-64 64v80h72v-72zm504 72H160c-17.700 0-32 14.300-32 32v32c0 4.400 3.600 8 8 8h60.400l24.700 523c1.600 34.100 29.800 61 63.900 61h454c34.200 0 62.300-26.800 63.900-61l24.700-523H888c4.400 0 8-3.600 8-8v-32c0-17.700-14.300-32-32-32zM731.300 840H292.700l-24.200-512h487l-24.200 512z"/></svg></span><span class="tx" style="letter-spacing:-0.031px;">Delete</span></button>
      <button class="btn" style="width:82px"><span class="anticon" style="font-size:14px;"><svg viewBox="64 64 896 896" width="1em" height="1em" fill="currentColor"><path d="M872 474H286.900l350.200-304c5.600-4.900 2.200-14-5.200-14h-88.500c-3.900 0-7.600 1.400-10.500 3.900L155 487.800a31.960 31.960 0 000 48.300L535.100 866c1.500 1.300 3.300 2 5.200 2h91.500c7.400 0 10.800-9.200 5.200-14L286.900 550H872c4.400 0 8-3.600 8-8v-60c0-4.400-3.600-8-8-8z"/></svg></span><span class="tx" style="letter-spacing:-0.833px;">Back</span></button>
    </div>
  </div>
  <main class="card">
    <div class="vh"><h4 class="tx sb" style="letter-spacing:0.331px;">My Software Vendor</h4><a class="lnk"><span class="anticon" style="font-size:14px;"><svg viewBox="64 64 896 896" width="1em" height="1em" fill="currentColor"><path d="M574 665.400a8.030 8.030 0 00-11.300 0L446.500 781.600c-53.800 53.800-144.600 59.500-204 0-59.500-59.500-53.800-150.200 0-204l116.200-116.200c3.100-3.100 3.100-8.200 0-11.300l-39.800-39.800a8.030 8.030 0 00-11.300 0L191.400 526.500c-84.600 84.600-84.600 221.500 0 306s221.500 84.600 306 0l116.200-116.200c3.100-3.100 3.100-8.200 0-11.300L574 665.400zm258.600-474c-84.600-84.600-221.500-84.600-306 0L410.300 307.600a8.030 8.030 0 000 11.300l39.700 39.700c3.100 3.100 8.200 3.100 11.300 0l116.200-116.200c53.800-53.800 144.600-59.500 204 0 59.500 59.500 53.800 150.200 0 204L665.300 562.600a8.030 8.030 0 000 11.300l39.800 39.800c3.100 3.100 8.200 3.100 11.300 0l116.200-116.200c84.500-84.600 84.500-221.500 0-306.100zM610.100 372.300a8.030 8.030 0 00-11.300 0L372.300 598.700a8.030 8.030 0 000 11.300l39.600 39.600c3.100 3.100 8.200 3.100 11.300 0l226.400-226.400c3.100-3.100 3.100-8.200 0-11.300l-39.500-39.600z"/></svg></span><span class="tx" style="letter-spacing:0.223px;">https://www.vendor.com</span></a></div>
    <section class="scard first about">
      <div class="shead"><span class="tx sb" style="letter-spacing:0.508px;">About</span><span class="edit"><span class="anticon" style="font-size:14px;"><svg viewBox="64 64 896 896" width="1em" height="1em" fill="currentColor"><path d="M904 512h-56c-4.400 0-8 3.600-8 8v320H184V184h320c4.400 0 8-3.600 8-8v-56c0-4.400-3.600-8-8-8H144c-17.700 0-32 14.300-32 32v736c0 17.700 14.300 32 32 32h736c17.700 0 32-14.300 32-32V520c0-4.400-3.600-8-8-8z"/><path d="M355.900 534.900L354 653.800c-.1 8.900 7.100 16.200 16 16.200h.4l118-2.900c2-.1 4-.9 5.400-2.300l415.900-415c3.100-3.100 3.100-8.200 0-11.300L785.400 114.300c-1.600-1.600-3.600-2.300-5.700-2.300s-4.100.8-5.700 2.300l-415.800 415a8.300 8.300 0 00-2.300 5.600zm63.500 23.600L779.700 199l45.200 45.100-360.500 359.700-45.700 1.100.7-46.400z"/></svg></span></span></div>
      <div class="sbody">
        <div class="row"><span class="lb"><span class="tx sb" style="letter-spacing:0.312px;">Name</span></span><span class="vl"><span class="tx" style="letter-spacing:-0.018px;">My Software Vendor</span></span></div>
        <div class="row"><span class="lb"><span class="tx sb" style="letter-spacing:0.052px;">Website</span></span><span class="vl"><a class="tx" style="letter-spacing:0.208px;">https://www.vendor.com</a></span></div>
        <div class="row"><span class="lb"><span class="tx sb" style="letter-spacing:-0.312px;">Type</span></span><span class="vl"><span class="tx" style="letter-spacing:0.129px;">Software &amp; Tooling</span></span></div>
        <div class="row"><span class="lb"><span class="tx sb" style="letter-spacing:0.134px;">Category</span></span><span class="vl"><span class="tx" style="letter-spacing:0.017px;">Collaboration Tools</span></span></div>
        <div class="row"><span class="lb"><span class="tx sb" style="letter-spacing:-0.094px;">Data Shared</span></span><span class="vl"><span class="tx" style="letter-spacing:-0.156px;">No Sensitive Data</span></span></div>
        <div class="row"><span class="lb"><span class="tx sb" style="letter-spacing:0.142px;">Support Plan</span></span><span class="vl"></span></div>
        <div class="row"><span class="lb"><span class="tx sb" style="letter-spacing:0.072px;">Security Owner</span></span><span class="vl"><span class="tx" style="letter-spacing:-0.227px;">Jacob Nemetz</span></span></div>
        <div class="row"><span class="lb"><span class="tx sb" style="letter-spacing:0.312px;">Onboarding date</span></span><span class="vl"></span></div>
        <div class="row"><span class="lb"><span class="tx sb" style="letter-spacing:0.25px;">Termination date</span></span><span class="vl"></span></div>
        <div class="row"><span class="lb"><span class="tx sb" style="letter-spacing:-0.312px;">Last Review</span></span><span class="vl"></span></div>
        <div class="row"><span class="lb"><span class="tx sb" style="letter-spacing:-0.031px;">Next Review</span></span><span class="vl"></span></div>
      </div>
    </section>
    <section class="scard empty">
      <div class="shead"><span class="tx sb" style="letter-spacing:0.187px;">Security Attestations</span><span class="edit"><span class="anticon" style="font-size:14px;"><svg viewBox="64 64 896 896" width="1em" height="1em" fill="currentColor"><path d="M904 512h-56c-4.400 0-8 3.600-8 8v320H184V184h320c4.400 0 8-3.600 8-8v-56c0-4.400-3.600-8-8-8H144c-17.700 0-32 14.300-32 32v736c0 17.700 14.300 32 32 32h736c17.700 0 32-14.300 32-32V520c0-4.400-3.600-8-8-8z"/><path d="M355.900 534.900L354 653.800c-.1 8.900 7.100 16.200 16 16.200h.4l118-2.900c2-.1 4-.9 5.400-2.300l415.900-415c3.100-3.100 3.100-8.200 0-11.300L785.400 114.300c-1.600-1.600-3.600-2.300-5.700-2.300s-4.100.8-5.700 2.300l-415.800 415a8.300 8.300 0 00-2.300 5.600zm63.500 23.600L779.700 199l45.200 45.100-360.500 359.700-45.700 1.100.7-46.400z"/></svg></span></span></div>
      <div class="sbody"><div class="eimg"><svg viewBox="0 0 184 152" xmlns="http://www.w3.org/2000/svg"><g fill="none" fill-rule="evenodd"><g transform="translate(24 31.67)"><ellipse fill-opacity=".8" fill="#F5F5F7" cx="67.797" cy="106.89" rx="67.797" ry="12.668"/><path d="M122.034 69.674L98.109 40.229c-1.148-1.386-2.826-2.225-4.593-2.225h-51.44c-1.766 0-3.444.839-4.592 2.225L13.56 69.674v15.383h108.475V69.674z" fill="#AEB8C2"/><path d="M33.83 0h67.933a4 4 0 0 1 4 4v93.344a4 4 0 0 1-4 4H33.83a4 4 0 0 1-4-4V4a4 4 0 0 1 4-4z" fill="#F5F5F7"/><path d="M42.678 9.953h50.237a2 2 0 0 1 2 2V36.91a2 2 0 0 1-2 2H42.678a2 2 0 0 1-2-2V11.953a2 2 0 0 1 2-2zM42.94 49.767h49.713a2.262 2.262 0 1 1 0 4.524H42.94a2.262 2.262 0 0 1 0-4.524zM42.94 61.53h49.713a2.262 2.262 0 1 1 0 4.525H42.94a2.262 2.262 0 0 1 0-4.525zM121.813 105.032c-.775 3.071-3.497 5.36-6.735 5.36H20.515c-3.238 0-5.96-2.29-6.734-5.36a7.309 7.309 0 0 1-.222-1.79V69.675h26.318c2.907 0 5.25 2.448 5.25 5.42v.04c0 2.971 2.37 5.37 5.277 5.37h34.785c2.907 0 5.277-2.421 5.277-5.393V75.1c0-2.972 2.343-5.426 5.25-5.426h26.318v33.569c0 .617-.077 1.216-.221 1.789z" fill="#DCE0E6"/></g><path d="M149.121 33.292l-6.83 2.65a1 1 0 0 1-1.317-1.23l1.937-6.207c-2.589-2.944-4.109-6.534-4.109-10.408C138.802 8.102 148.92 0 161.402 0 173.881 0 184 8.102 184 18.097c0 9.995-10.118 18.097-22.599 18.097-4.528 0-8.744-1.066-12.28-2.902z" fill="#DCE0E6"/><g transform="translate(149.65 15.383)" fill="#FFF"><ellipse cx="20.654" cy="3.167" rx="2.849" ry="2.815"/><path d="M5.698 5.63H0L2.898.704zM9.259.704h4.985V5.63H9.259z"/></g></g></svg></div><div class="etxt"><span class="tx" style="letter-spacing:0.078px;">No attestations added</span></div></div>
    </section>
    <section class="scard empty">
      <div class="shead"><span class="tx sb" style="letter-spacing:-0.059px;">Services Provided</span><span class="edit"><span class="anticon" style="font-size:14px;"><svg viewBox="64 64 896 896" width="1em" height="1em" fill="currentColor"><path d="M904 512h-56c-4.400 0-8 3.600-8 8v320H184V184h320c4.400 0 8-3.600 8-8v-56c0-4.400-3.600-8-8-8H144c-17.700 0-32 14.300-32 32v736c0 17.700 14.300 32 32 32h736c17.700 0 32-14.300 32-32V520c0-4.400-3.600-8-8-8z"/><path d="M355.900 534.900L354 653.800c-.1 8.900 7.100 16.200 16 16.200h.4l118-2.900c2-.1 4-.9 5.400-2.300l415.900-415c3.100-3.100 3.100-8.200 0-11.300L785.400 114.300c-1.600-1.600-3.600-2.300-5.700-2.300s-4.100.8-5.700 2.300l-415.800 415a8.300 8.300 0 00-2.300 5.600zm63.500 23.600L779.700 199l45.200 45.100-360.500 359.700-45.700 1.100.7-46.400z"/></svg></span></span></div>
      <div class="sbody"><div class="eimg"><svg viewBox="0 0 184 152" xmlns="http://www.w3.org/2000/svg"><g fill="none" fill-rule="evenodd"><g transform="translate(24 31.67)"><ellipse fill-opacity=".8" fill="#F5F5F7" cx="67.797" cy="106.89" rx="67.797" ry="12.668"/><path d="M122.034 69.674L98.109 40.229c-1.148-1.386-2.826-2.225-4.593-2.225h-51.44c-1.766 0-3.444.839-4.592 2.225L13.56 69.674v15.383h108.475V69.674z" fill="#AEB8C2"/><path d="M33.83 0h67.933a4 4 0 0 1 4 4v93.344a4 4 0 0 1-4 4H33.83a4 4 0 0 1-4-4V4a4 4 0 0 1 4-4z" fill="#F5F5F7"/><path d="M42.678 9.953h50.237a2 2 0 0 1 2 2V36.91a2 2 0 0 1-2 2H42.678a2 2 0 0 1-2-2V11.953a2 2 0 0 1 2-2zM42.94 49.767h49.713a2.262 2.262 0 1 1 0 4.524H42.94a2.262 2.262 0 0 1 0-4.524zM42.94 61.53h49.713a2.262 2.262 0 1 1 0 4.525H42.94a2.262 2.262 0 0 1 0-4.525zM121.813 105.032c-.775 3.071-3.497 5.36-6.735 5.36H20.515c-3.238 0-5.96-2.29-6.734-5.36a7.309 7.309 0 0 1-.222-1.79V69.675h26.318c2.907 0 5.25 2.448 5.25 5.42v.04c0 2.971 2.37 5.37 5.277 5.37h34.785c2.907 0 5.277-2.421 5.277-5.393V75.1c0-2.972 2.343-5.426 5.25-5.426h26.318v33.569c0 .617-.077 1.216-.221 1.789z" fill="#DCE0E6"/></g><path d="M149.121 33.292l-6.83 2.65a1 1 0 0 1-1.317-1.23l1.937-6.207c-2.589-2.944-4.109-6.534-4.109-10.408C138.802 8.102 148.92 0 161.402 0 173.881 0 184 8.102 184 18.097c0 9.995-10.118 18.097-22.599 18.097-4.528 0-8.744-1.066-12.28-2.902z" fill="#DCE0E6"/><g transform="translate(149.65 15.383)" fill="#FFF"><ellipse cx="20.654" cy="3.167" rx="2.849" ry="2.815"/><path d="M5.698 5.63H0L2.898.704zM9.259.704h4.985V5.63H9.259z"/></g></g></svg></div><div class="etxt"><span class="tx" style="letter-spacing:-0.033px;">No services provided</span></div></div>
    </section>
    <section class="scard empty">
      <div class="shead"><span class="tx sb" style="letter-spacing:0.347px;">Contact Information</span><span class="edit"><span class="anticon" style="font-size:14px;"><svg viewBox="64 64 896 896" width="1em" height="1em" fill="currentColor"><path d="M904 512h-56c-4.400 0-8 3.600-8 8v320H184V184h320c4.400 0 8-3.600 8-8v-56c0-4.400-3.600-8-8-8H144c-17.700 0-32 14.300-32 32v736c0 17.700 14.300 32 32 32h736c17.700 0 32-14.300 32-32V520c0-4.400-3.600-8-8-8z"/><path d="M355.900 534.900L354 653.800c-.1 8.900 7.100 16.200 16 16.200h.4l118-2.900c2-.1 4-.9 5.400-2.300l415.900-415c3.100-3.100 3.100-8.200 0-11.300L785.400 114.300c-1.600-1.600-3.600-2.300-5.700-2.300s-4.100.8-5.700 2.300l-415.800 415a8.300 8.300 0 00-2.300 5.600zm63.500 23.600L779.700 199l45.200 45.100-360.500 359.700-45.700 1.100.7-46.400z"/></svg></span></span></div>
      <div class="sbody"><div class="eimg"><svg viewBox="0 0 184 152" xmlns="http://www.w3.org/2000/svg"><g fill="none" fill-rule="evenodd"><g transform="translate(24 31.67)"><ellipse fill-opacity=".8" fill="#F5F5F7" cx="67.797" cy="106.89" rx="67.797" ry="12.668"/><path d="M122.034 69.674L98.109 40.229c-1.148-1.386-2.826-2.225-4.593-2.225h-51.44c-1.766 0-3.444.839-4.592 2.225L13.56 69.674v15.383h108.475V69.674z" fill="#AEB8C2"/><path d="M33.83 0h67.933a4 4 0 0 1 4 4v93.344a4 4 0 0 1-4 4H33.83a4 4 0 0 1-4-4V4a4 4 0 0 1 4-4z" fill="#F5F5F7"/><path d="M42.678 9.953h50.237a2 2 0 0 1 2 2V36.91a2 2 0 0 1-2 2H42.678a2 2 0 0 1-2-2V11.953a2 2 0 0 1 2-2zM42.94 49.767h49.713a2.262 2.262 0 1 1 0 4.524H42.94a2.262 2.262 0 0 1 0-4.524zM42.94 61.53h49.713a2.262 2.262 0 1 1 0 4.525H42.94a2.262 2.262 0 0 1 0-4.525zM121.813 105.032c-.775 3.071-3.497 5.36-6.735 5.36H20.515c-3.238 0-5.96-2.29-6.734-5.36a7.309 7.309 0 0 1-.222-1.79V69.675h26.318c2.907 0 5.25 2.448 5.25 5.42v.04c0 2.971 2.37 5.37 5.277 5.37h34.785c2.907 0 5.277-2.421 5.277-5.393V75.1c0-2.972 2.343-5.426 5.25-5.426h26.318v33.569c0 .617-.077 1.216-.221 1.789z" fill="#DCE0E6"/></g><path d="M149.121 33.292l-6.83 2.65a1 1 0 0 1-1.317-1.23l1.937-6.207c-2.589-2.944-4.109-6.534-4.109-10.408C138.802 8.102 148.92 0 161.402 0 173.881 0 184 8.102 184 18.097c0 9.995-10.118 18.097-22.599 18.097-4.528 0-8.744-1.066-12.28-2.902z" fill="#DCE0E6"/><g transform="translate(149.65 15.383)" fill="#FFF"><ellipse cx="20.654" cy="3.167" rx="2.849" ry="2.815"/><path d="M5.698 5.63H0L2.898.704zM9.259.704h4.985V5.63H9.259z"/></g></g></svg></div><div class="etxt"><span class="tx" style="letter-spacing:0.078px;">No contacts added</span></div></div>
    </section>
  </main>
</section>
</div>

</body>
</html>
